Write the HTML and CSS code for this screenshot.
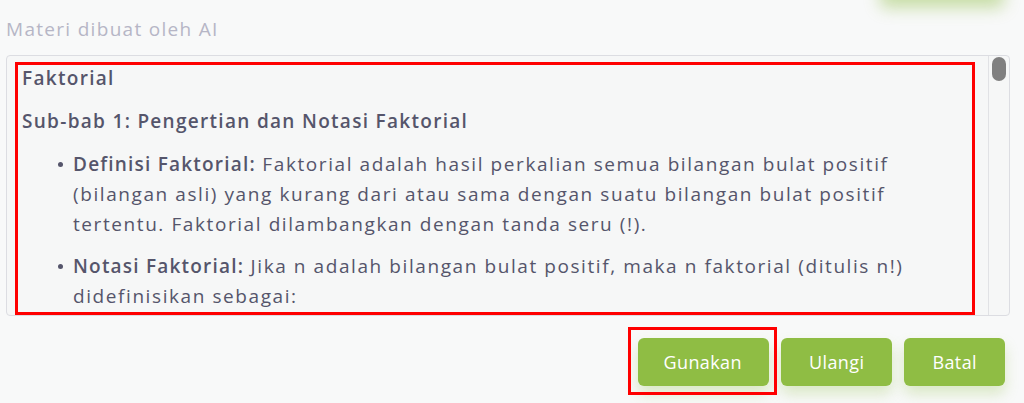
FILE: index.html
```html
<!DOCTYPE html>
<html lang="id">
<head>
<meta charset="utf-8">
<title>Materi dibuat oleh AI</title>
<link rel="stylesheet" href="styles.css">
</head>
<body>
<div class="prev-shadow"></div>
<main class="panel">
  <div class="label">Materi dibuat oleh AI</div>
  <section class="box">
    <div class="content">
      <h3 class="title">Faktorial</h3>
      <h4 class="subtitle">Sub-bab 1: Pengertian dan Notasi Faktorial</h4>
      <ul class="list">
        <li><strong>Definisi Faktorial:</strong> Faktorial adalah hasil perkalian semua bilangan bulat positif (bilangan asli) yang kurang dari atau sama dengan suatu bilangan bulat positif tertentu. Faktorial dilambangkan dengan tanda seru (!).</li>
        <li><strong>Notasi Faktorial:</strong> Jika n adalah bilangan bulat positif, maka n faktorial (ditulis n!) didefinisikan sebagai:</li>
      </ul>
    </div>
    <div class="scrollbar"><div class="thumb"></div></div>
  </section>
  <div class="actions">
    <button class="btn btn-marked">Gunakan</button>
    <button class="btn">Ulangi</button>
    <button class="btn">Batal</button>
  </div>
</main>
</body>
</html>
```
FILE: styles.css
```css
html, body {
  margin: 0;
  padding: 0;
  background: #f8f9f9;
  overflow: hidden;
}
body {
  font-family: "Open Sans", "Noto Sans", sans-serif;
  color: #55556b;
  position: relative;
  width: 1024px;
  height: 403px;
}
.prev-shadow {
  position: absolute;
  top: -52px;
  right: 20px;
  width: 124px;
  height: 48px;
  border-radius: 6px;
  background: #8fbd44;
  box-shadow: 0 12px 16px rgba(143, 189, 68, 0.45);
}
.panel {
  padding: 17px 14px 0 6px;
}
.label {
  font-size: 19px;
  line-height: 24px;
  letter-spacing: 1.3px;
  color: #b6b6c6;
  margin-bottom: 14px;
}
.box {
  display: flex;
  height: 259px;
  border: 1px solid #dcdde2;
  border-radius: 4px;
  background: #f6f7f7;
  overflow: hidden;
}
.content {
  flex: 1;
  margin: 6px 13px 0 8px;
  border: 3px solid #ff0000;
  padding: 0 4px;
  overflow: hidden;
  font-size: 19px;
  letter-spacing: 1.58px;
}
.title {
  margin: 0;
  font-size: 19px;
  font-weight: 600;
  line-height: 26px;
  letter-spacing: 1.3px;
}
.subtitle {
  margin: 17px 0 0;
  font-size: 19px;
  font-weight: 600;
  line-height: 26px;
  letter-spacing: 1.3px;
}
.list {
  list-style: none;
  margin: 15px 0 0;
  padding: 0 0 0 51px;
}
.list li {
  position: relative;
  line-height: 30px;
  margin-bottom: 12px;
}
.list li::before {
  content: "";
  position: absolute;
  left: -15px;
  top: 13px;
  width: 5px;
  height: 5px;
  border-radius: 50%;
  background: #55556b;
}
.list strong {
  font-weight: 600;
  letter-spacing: 1.2px;
}
.scrollbar {
  box-sizing: border-box;
  width: 21px;
  border-left: 1px solid #e1e2e5;
  padding: 1px 0 0 3px;
}
.thumb {
  width: 14px;
  height: 24px;
  border-radius: 7px;
  background: #808080;
}
.actions {
  display: flex;
  justify-content: flex-end;
  gap: 12px;
  margin-top: 22px;
  padding-right: 5px;
}
.btn {
  height: 48px;
  padding: 0 28px;
  border: none;
  border-radius: 6px;
  background: #8fbd44;
  color: #ffffff;
  font-family: "Open Sans", "Noto Sans", sans-serif;
  font-size: 18px;
  letter-spacing: 0.4px;
  box-shadow: 0 8px 14px rgba(143, 189, 68, 0.28);
}
.btn-marked {
  position: relative;
  padding: 0 27px 0 26px;
}
.btn-marked::after {
  content: "";
  position: absolute;
  top: -11px;
  left: -10px;
  right: -8px;
  bottom: -9px;
  border: 3px solid #ff0000;
}
```
